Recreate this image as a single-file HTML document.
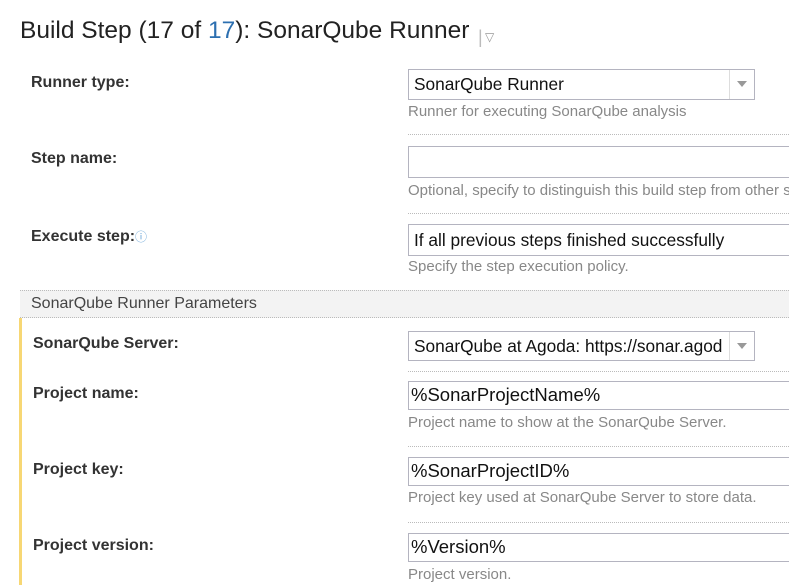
<!DOCTYPE html>
<html><head><style>
body{margin:0;width:789px;height:585px;overflow:hidden;background:#fff;font-family:"Liberation Sans",Arial,sans-serif;position:relative;color:#333}
.a{position:absolute;white-space:nowrap}
h1{position:absolute;left:20px;top:17px;margin:0;font-weight:normal;font-size:24.5px;color:#222}
.lbl{position:absolute;left:31px;font-weight:bold;font-size:16px;color:#333}
.inp{position:absolute;left:408px;height:28px;border:1px solid #b4b4c0;box-sizing:border-box;font-size:17.3px;line-height:26px;padding-left:5px;color:#111;background:#fff;white-space:nowrap;overflow:hidden}
.mono{padding-left:2px;font-size:18.5px}
.hint{position:absolute;left:408px;font-size:15px;color:#888;white-space:nowrap}
.sep{position:absolute;left:408px;right:0;border-top:1px dotted #bbb}
.arr{position:absolute;right:0;top:0;width:24px;height:100%;border-left:1px solid #ddd}
.arr:after{content:"";position:absolute;left:7px;top:11px;border:5px solid transparent;border-top:6px solid #999}
</style></head><body>
<h1>Build Step (17 of <span style="color:#2c6fb0">17</span>): SonarQube Runner</h1>
<div class="a" style="left:478px;top:27px;color:#bbb;font-size:18px">|</div>
<div class="a" style="left:485px;top:30px;color:#999;font-size:12px">▽</div>

<div class="lbl" style="top:74px">Runner type:</div>
<div class="inp" style="top:69px;width:347px;height:31px;line-height:29px">SonarQube Runner<div class="arr"></div></div>
<div class="hint" style="top:103px">Runner for executing SonarQube analysis</div>
<div class="sep" style="top:134px"></div>

<div class="lbl" style="top:150px">Step name:</div>
<div class="inp" style="top:146px;width:400px;height:32px"></div>
<div class="hint" style="top:182px">Optional, specify to distinguish this build step from other steps.</div>
<div class="sep" style="top:213px"></div>

<div class="lbl" style="top:228px">Execute step:<span style="color:#6aa6d8;font-size:12px;font-weight:normal;vertical-align:top">ⓘ</span></div>
<div class="inp" style="top:224px;width:400px;height:32px;line-height:30px">If all previous steps finished successfully</div>
<div class="hint" style="top:258px">Specify the step execution policy.</div>

<div class="a" style="left:20px;top:290px;width:769px;height:26px;background:#f3f3f3;border-top:1px dotted #bbb;border-bottom:1px dotted #bbb"></div>
<div class="a" style="left:31px;top:295px;font-size:16px;color:#444">SonarQube Runner Parameters</div>
<div class="a" style="left:19px;top:318px;width:3px;height:267px;background:#f7d774"></div>

<div class="lbl" style="top:335px;left:33px">SonarQube Server:</div>
<div class="inp" style="top:331px;width:347px;height:30px;line-height:28px">SonarQube at Agoda: https://sonar.agod<div class="arr"></div></div>
<div class="sep" style="top:371px"></div>

<div class="lbl" style="top:385px;left:33px">Project name:</div>
<div class="inp mono" style="top:381px;width:400px;height:29px">%SonarProjectName%</div>
<div class="hint" style="top:414px">Project name to show at the SonarQube Server.</div>
<div class="sep" style="top:446px"></div>

<div class="lbl" style="top:461px;left:33px">Project key:</div>
<div class="inp mono" style="top:457px;width:400px;height:29px">%SonarProjectID%</div>
<div class="hint" style="top:489px">Project key used at SonarQube Server to store data.</div>
<div class="sep" style="top:522px"></div>

<div class="lbl" style="top:537px;left:33px">Project version:</div>
<div class="inp mono" style="top:533px;width:400px;height:29px">%Version%</div>
<div class="hint" style="top:566px">Project version.</div>
</body></html>
